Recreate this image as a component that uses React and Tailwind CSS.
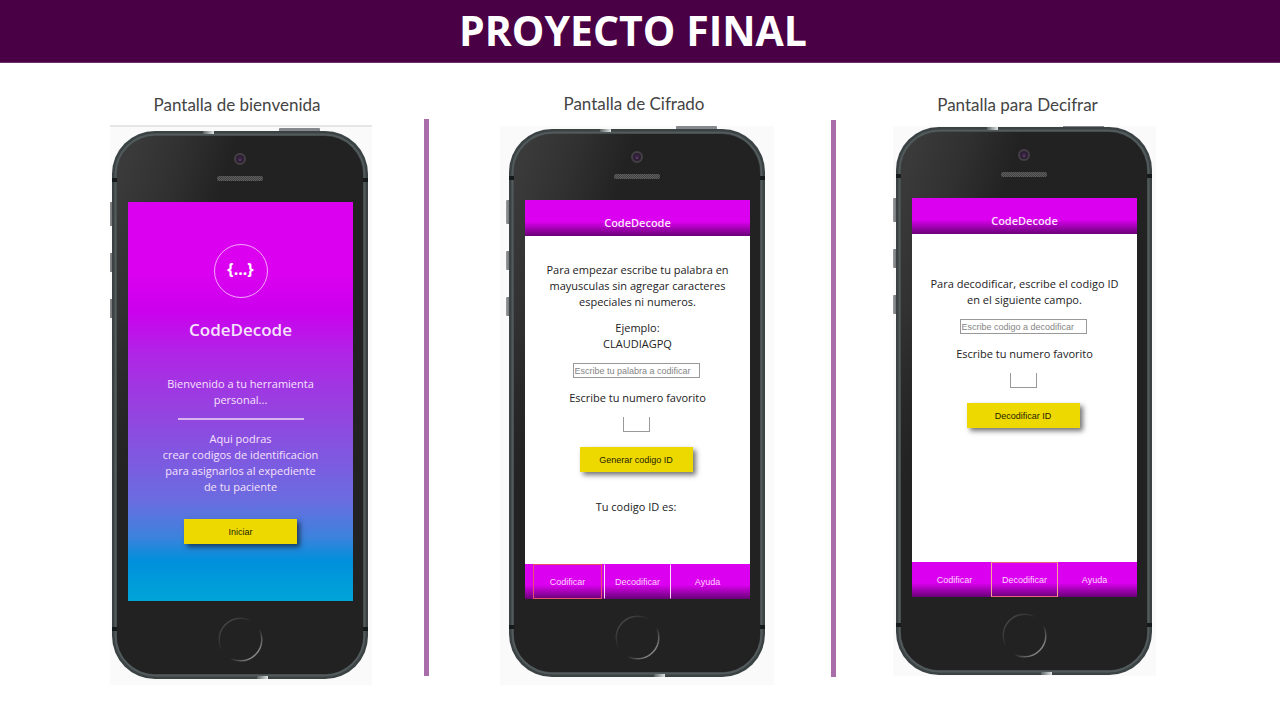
import React from "react";

function PhoneFrame({ id }) {
  return (
    <svg
      className="absolute -left-[3px] -top-[3px]"
      width="262"
      height="551"
      viewBox="-3 -3 262 551"
      aria-hidden="true"
    >
      <defs>
        <linearGradient id={`${id}-face`} gradientUnits="userSpaceOnUse" x1="5" y1="60" x2="100" y2="90">
          <stop offset="0" stopColor="#3a3a3a" />
          <stop offset="0.5" stopColor="#303030" />
          <stop offset="1" stopColor="#222222" />
        </linearGradient>
        <linearGradient id={`${id}-fade`} x1="0" y1="0" x2="0" y2="1">
          <stop offset="0" stopColor="#222222" stopOpacity="0" />
          <stop offset="1" stopColor="#222222" />
        </linearGradient>
        <linearGradient id={`${id}-shine`} x1="0" y1="0" x2="1" y2="0">
          <stop offset="0" stopColor="#5b6364" />
          <stop offset="1" stopColor="#e2e4e4" />
        </linearGradient>
        <linearGradient id={`${id}-key`} x1="0" y1="0" x2="1" y2="0">
          <stop offset="0" stopColor="#9a9c9e" />
          <stop offset="1" stopColor="#5c5f61" />
        </linearGradient>
        <linearGradient id={`${id}-ring`} x1="0" y1="0" x2="1" y2="1">
          <stop offset="0.1" stopColor="#4a4a4a" />
          <stop offset="0.42" stopColor="#222222" />
          <stop offset="0.6" stopColor="#222222" />
          <stop offset="0.85" stopColor="#858585" />
        </linearGradient>
        <pattern id={`${id}-mesh`} width="2" height="2" patternUnits="userSpaceOnUse">
          <rect width="2" height="2" fill="#404040" />
          <rect width="1" height="1" fill="#606060" />
          <rect x="1" y="1" width="1" height="1" fill="#606060" />
        </pattern>
      </defs>
      <rect x="167" y="-3" width="41" height="5" rx="1" fill="#85888c" />
      <rect x="-3" y="71" width="5" height="24" rx="1" fill={`url(#${id}-key)`} />
      <rect x="-3" y="122" width="5" height="19" rx="1" fill={`url(#${id}-key)`} />
      <rect x="-3" y="168" width="5" height="19" rx="1" fill={`url(#${id}-key)`} />
      <rect x="0" y="0" width="256" height="548" rx="43" fill="#3a4243" />
      <rect x="3.500" y="3.500" width="249" height="541" rx="40" fill="none" stroke="#525a5b" strokeWidth="2" />
      <rect x="5" y="5" width="246" height="538" rx="38" fill={`url(#${id}-face)`} />
      <rect x="5" y="180" width="100" height="280" fill={`url(#${id}-fade)`} />
      <path d="M5 459H251V505a38 38 0 0 1-38 38H43a38 38 0 0 1-38-38Z" fill="#222222" />
      <rect x="91" y="0" width="11" height="3" fill={`url(#${id}-shine)`} />
      <rect x="145" y="545" width="11" height="3" fill={`url(#${id}-shine)`} />
      <path d="M0 47h5v4H0zM251 47h5v4h-5zM0 496h5v4H0zM251 496h5v4h-5z" fill="#171a1a" />
      <circle cx="128" cy="28" r="5" fill="#2b1e33" stroke="#444046" strokeWidth="2" />
      <circle cx="128" cy="28" r="2.5" fill="#3a2344" />
      <circle cx="128" cy="29" r="0.8" fill="#75637c" />
      <rect x="105" y="45" width="46" height="5" rx="2" fill={`url(#${id}-mesh)`} />
      <circle cx="128.500" cy="508.500" r="21.300" fill="none" stroke={`url(#${id}-ring)`} strokeWidth="1.500" />
    </svg>
  );
}

function Phone({ id, children }) {
  return (
    <div className="relative w-[256px] pt-[71px] pb-[78px] pl-4 pr-[15px]">
      <PhoneFrame id={id} />
      <div className="relative flex h-[399px] flex-col overflow-hidden text-center text-[11px] leading-4">
        {children}
      </div>
    </div>
  );
}

function AppHeader() {
  return (
    <header className="h-9 shrink-0 bg-linear-to-b from-[#dc00f0] from-60% to-[#6a0078] pt-[15px] text-[11px] leading-4 font-semibold text-[#fbe6fd]">
      CodeDecode
    </header>
  );
}

function AppNav({ active }) {
  const base = "border font-['Liberation_Sans',sans-serif] text-[9px] text-[#fbd9fd]";
  return (
    <nav className="mt-auto grid h-[35px] shrink-0 grid-cols-[69px_67px_1fr] gap-x-[2px] bg-linear-to-b from-[#dc00f0] from-60% to-[#6a0078] px-2">
      <button className={`${base} ${active === "Codificar" ? "border-[#e8506a]" : "border-transparent"}`}>
        Codificar
      </button>
      <button
        className={`${base} ${
          active === "Decodificar" ? "border-x-[#f7a58f] border-y-[#ea6080]" : "border-x-[#fbe0fc] border-y-transparent"
        }`}
      >
        Decodificar
      </button>
      <button className={`${base} border-transparent`}>Ayuda</button>
    </nav>
  );
}

function ActionButton({ children }) {
  return (
    <button className="block h-[25px] w-[113px] bg-[#edd900] font-['Liberation_Sans',sans-serif] text-[9px] text-[#1f1c00] shadow-[3px_3px_5px_rgba(0,0,0,0.55)]">
      {children}
    </button>
  );
}

function CodeForm({ id, placeholder, action }) {
  return (
    <form className="flex flex-col items-center">
      <div className="pr-[3px]">
        <input
          type="text"
          aria-label={placeholder}
          placeholder={placeholder}
          className="block h-[15px] w-[127px] border border-[#999] bg-white px-px font-['Liberation_Sans',sans-serif] text-[9px] placeholder:text-[#858585]"
        />
      </div>
      <label htmlFor={id} className="mt-3">
        Escribe tu numero favorito
      </label>
      <div className="flex flex-col items-center gap-[15px] pt-[11px] pr-[3px]">
        <input
          id={id}
          type="text"
          inputMode="numeric"
          className="block h-[15px] w-[27px] border border-t-0 border-[#999] bg-white text-[9px]"
        />
        <ActionButton>{action}</ActionButton>
      </div>
    </form>
  );
}

function Caption({ className, children }) {
  return (
    <h2 className={`text-center font-['Lato',sans-serif] text-[17px] leading-6 text-[#444] ${className}`}>
      {children}
    </h2>
  );
}

export default function App() {
  return (
    <div className="min-h-screen bg-white font-['Open_Sans',sans-serif] text-[#222]">
      <header className="flex h-[63px] items-center justify-center border-b border-[#6d3069] bg-[#4a0045] pr-[14px] pb-[2px]">
        <h1 className="text-[41px] leading-[60px] font-bold text-white">PROYECTO FINAL</h1>
      </header>
      <main className="grid grid-cols-[424fr_5px_402fr_5px_444fr]">
        <section className="flex flex-col items-center pt-[30px] pl-[58px]">
          <Caption className="mb-2 pr-2">Pantalla de bienvenida</Caption>
          <div className="w-[262px] overflow-hidden border-t-2 border-[#e6e6e6] bg-[#fafafa] pt-1 pb-[6px] pl-[2px]">
            <Phone id="welcome">
              <div className="flex h-full flex-col items-center bg-[linear-gradient(#dc00f0_0%,#dc00f0_17%,#cc00ee_27%,#b025e6_38%,#9642e0_52%,#6a6de0_75%,#3c82dc_84%,#0090dc_90%,#00a5d8_100%)] pt-[42px] text-[#f6e2fc]">
                <div className="flex h-[54px] w-[54px] items-center justify-center rounded-full border border-[#f5a8fb] pb-1 text-[16px] font-bold text-white">
                  {"{...}"}
                </div>
                <h3 className="mt-5 text-[17px] leading-6 font-semibold">CodeDecode</h3>
                <p className="mt-[34px] w-[160px]">Bienvenido a tu herramienta personal...</p>
                <hr className="mt-[10px] mb-[11px] h-[2px] w-[126px] border-0 bg-[#d9b5f2]" />
                <p className="mb-6">
                  Aqui podras
                  <br />
                  crear codigos de identificacion
                  <br />
                  para asignarlos al expediente
                  <br />
                  de tu paciente
                </p>
                <ActionButton>Iniciar</ActionButton>
              </div>
            </Phone>
          </div>
        </section>

        <div className="mt-14 h-[557px] bg-[#a96da9]" />

        <section className="flex flex-col items-center pt-[29px] pl-[14px]">
          <Caption className="mb-[10px] pr-[6px]">Pantalla de Cifrado</Caption>
          <div className="w-[274px] overflow-hidden bg-[#fafafa] pt-[3px] pb-2 pl-[9px]">
            <Phone id="encode">
              <AppHeader />
              <div className="flex grow flex-col bg-white pt-[26px]">
                <p>
                  Para empezar escribe tu palabra en
                  <br />
                  mayusculas sin agregar caracteres
                  <br />
                  especiales ni numeros.
                </p>
                <p className="mt-[10px] mb-[11px]">
                  Ejemplo:
                  <br />
                  CLAUDIAGPQ
                </p>
                <CodeForm id="encode-number" placeholder="Escribe tu palabra a codificar" action="Generar codigo ID" />
                <p className="mt-[27px] pr-[3px]">Tu codigo ID es:</p>
              </div>
              <AppNav active="Codificar" />
            </Phone>
          </div>
        </section>

        <div className="mt-[57px] h-[557px] bg-[#a96da9]" />

        <section className="flex flex-col items-center pt-[30px] pr-[67px]">
          <Caption className="mb-[9px] pr-[14px]">Pantalla para Decifrar</Caption>
          <div className="w-[263px] overflow-hidden bg-[#fafafa] pt-px pb-px pl-[3px]">
            <Phone id="decode">
              <AppHeader />
              <div className="flex grow flex-col bg-white pt-[42px]">
                <p className="mb-[11px]">
                  Para decodificar, escribe el codigo ID
                  <br />
                  en el siguiente campo.
                </p>
                <CodeForm id="decode-number" placeholder="Escribe codigo a decodificar" action="Decodificar ID" />
              </div>
              <AppNav active="Decodificar" />
            </Phone>
          </div>
        </section>
      </main>
    </div>
  );
}
